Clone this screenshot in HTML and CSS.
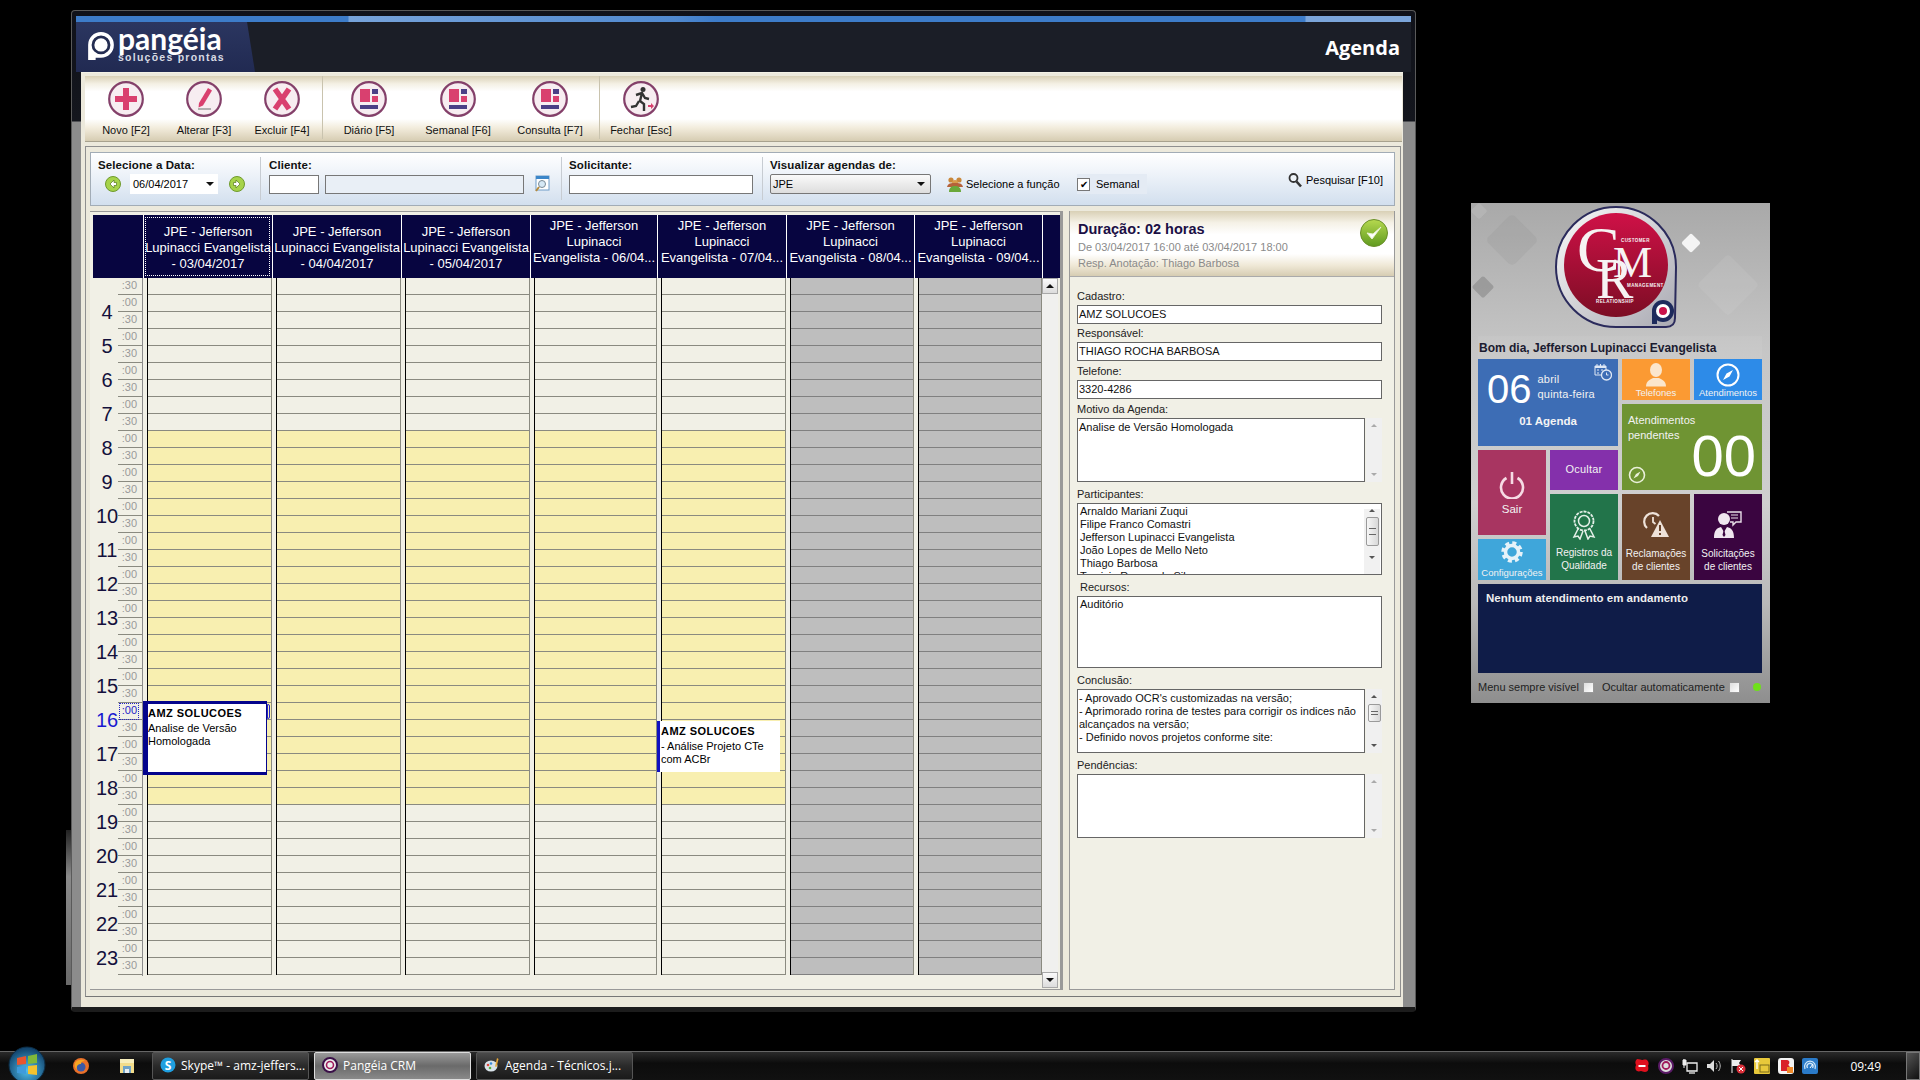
FILE: index.html
```html
<!DOCTYPE html>
<html lang="pt-BR">
<head>
  <meta charset="UTF-8">
  <title>Pangéia CRM - Agenda</title>
  <link rel="stylesheet" href="styles.css">
</head>
<body>
<div class="desktop">
  <div class="glass-edge"></div>

  <!-- janela principal -->
  <section class="window">
    <div class="strip"></div>
    <header class="head">
      <div class="logo-tab">
        <svg class="logo-mark" viewBox="0 0 26 28" width="28" height="30">
          <path d="M1 27V13a12 12 0 1 1 12 12H8v2z" fill="#fff"/>
          <circle cx="13" cy="13" r="7.500" fill="none" stroke="#242d52" stroke-width="2.600"/>
          <circle cx="13" cy="13" r="3.800" fill="#fff"/>
        </svg>
        <div class="logo-text">
          <span class="logo-name">pangéia</span>
          <span class="logo-sub">soluções prontas</span>
        </div>
      </div>
      <h1 class="head-title">Agenda</h1>
    </header>

    <div class="client">
      <nav class="toolbar">
        <div class="tool-group group-a">
          <div class="tool">
            <svg class="tool-icon" viewBox="0 0 36 36"><circle class="ring" cx="18" cy="18" r="16.8"/><path d="M15 7h6v8h8v6h-8v8h-6v-8H7v-6h8z" fill="#d9406f"/></svg>
            <span>Novo [F2]</span>
          </div>
          <div class="tool">
            <svg class="tool-icon" viewBox="0 0 36 36"><circle class="ring" cx="18" cy="18" r="16.8"/><path d="M22 7l4 2.500-9 15-4.500 2 .5-4.500z" fill="#d9406f"/><path d="M12 28h13" stroke="#9a9a9a" stroke-width="1.500"/></svg>
            <span>Alterar [F3]</span>
          </div>
          <div class="tool">
            <svg class="tool-icon" viewBox="0 0 36 36"><circle class="ring" cx="18" cy="18" r="16.8"/><path d="M11 8l14 20M25 8L11 28" stroke="#d9406f" stroke-width="5.500" fill="none"/></svg>
            <span>Excluir [F4]</span>
          </div>
        </div>
        <div class="tool-group group-b">
          <div class="tool">
            <svg class="tool-icon" viewBox="0 0 36 36"><circle class="ring" cx="18" cy="18" r="16.8"/><rect x="9" y="8" width="10" height="13" fill="#d9406f"/><rect x="21" y="8" width="6" height="5" fill="#4b3f86"/><rect x="21" y="15" width="6" height="6" fill="#d9406f"/><rect x="9" y="24" width="18" height="4" fill="#4b3f86"/></svg>
            <span>Diário [F5]</span>
          </div>
          <div class="tool">
            <svg class="tool-icon" viewBox="0 0 36 36"><circle class="ring" cx="18" cy="18" r="16.8"/><rect x="9" y="8" width="10" height="13" fill="#d9406f"/><rect x="21" y="8" width="6" height="5" fill="#4b3f86"/><rect x="21" y="15" width="6" height="6" fill="#d9406f"/><rect x="9" y="24" width="18" height="4" fill="#4b3f86"/></svg>
            <span>Semanal [F6]</span>
          </div>
          <div class="tool">
            <svg class="tool-icon" viewBox="0 0 36 36"><circle class="ring" cx="18" cy="18" r="16.8"/><rect x="9" y="8" width="10" height="13" fill="#d9406f"/><rect x="21" y="8" width="6" height="5" fill="#4b3f86"/><rect x="21" y="15" width="6" height="6" fill="#d9406f"/><rect x="9" y="24" width="18" height="4" fill="#4b3f86"/></svg>
            <span>Consulta [F7]</span>
          </div>
        </div>
        <div class="tool-group group-c">
          <div class="tool">
            <svg class="tool-icon" viewBox="0 0 36 36"><circle class="ring" cx="18" cy="18" r="16.8"/><circle cx="20" cy="8.500" r="2.500" fill="#333"/><path d="M13 14l6-2 3 5 4 1M19 12l-2 8 4 3 0 7M16 20l-3 5-5 1" fill="none" stroke="#333" stroke-width="2.400"/><path d="M25 24h3v-2l3 3-3 3v-2h-3z" fill="#d9406f"/></svg>
            <span>Fechar [Esc]</span>
          </div>
        </div>
      </nav>

      <div class="frame">
        <div class="filters">
          <div class="filter filter-date">
            <label class="filter-label">Selecione a Data:</label>
            <div class="filter-row">
              <svg class="arrow-btn" viewBox="0 0 16 16" width="16" height="16"><circle cx="8" cy="8" r="7.500" fill="#a6d34a" stroke="#6f9a2c"/><path d="M9 4L5 8l4 4V9.500h2.500v-3H9z" fill="#fff" stroke="#577a20" stroke-width=".7"/></svg>
              <div class="date-box"><span>06/04/2017</span><i class="tri-down"></i></div>
              <svg class="arrow-btn" viewBox="0 0 16 16" width="16" height="16"><circle cx="8" cy="8" r="7.500" fill="#a6d34a" stroke="#6f9a2c"/><path d="M7 4l4 4-4 4V9.500H4.500v-3H7z" fill="#fff" stroke="#577a20" stroke-width=".7"/></svg>
            </div>
          </div>
          <div class="filter filter-client">
            <label class="filter-label">Cliente:</label>
            <div class="filter-row">
              <div class="inp inp-code"></div>
              <div class="inp inp-name"></div>
              <svg class="lookup" viewBox="0 0 16 18" width="16" height="18"><rect x="2" y="1" width="13" height="14" fill="#fff" stroke="#6f9cc8"/><rect x="2" y="1" width="13" height="3" fill="#3b86c9"/><circle cx="8" cy="9" r="3.500" fill="#d5e8f5" stroke="#7a8a96"/><path d="M5 12l-3 4" stroke="#b58a3c" stroke-width="2"/></svg>
            </div>
          </div>
          <div class="filter filter-solic">
            <label class="filter-label">Solicitante:</label>
            <div class="filter-row"><div class="inp inp-solic"></div></div>
          </div>
          <div class="filter filter-view">
            <label class="filter-label">Visualizar agendas de:</label>
            <div class="filter-row">
              <div class="select-box"><span>JPE</span><i class="tri-down"></i></div>
              <div class="role-pick">
                <svg viewBox="0 0 18 18" width="18" height="18"><circle cx="5" cy="5" r="2.600" fill="#c9873a"/><circle cx="13" cy="5" r="2.600" fill="#c9873a"/><circle cx="9" cy="8" r="3" fill="#d99b4a"/><path d="M1 12c1-4 4-4 8-4s7 0 8 4z" fill="#b5623a"/><path d="M3 17c0-5 3-6 6-6s6 1 6 6z" fill="#6aa83a"/></svg>
                <span>Selecione a função</span>
              </div>
              <div class="week-check"><i class="check-box">✔</i><span>Semanal</span></div>
              <div class="search-btn">
                <svg viewBox="0 0 16 16" width="16" height="16"><circle cx="6.500" cy="6" r="4" fill="#eef3f8" stroke="#333" stroke-width="1.800"/><path d="M9.500 9.500l4.500 5" stroke="#333" stroke-width="2.600"/></svg>
                <span>Pesquisar [F10]</span>
              </div>
            </div>
          </div>
        </div>

        <div class="work">
          <div class="schedule">
            <div class="sched-head">
              <div class="sched-corner"></div>
              <div class="day focus">JPE - Jefferson<br>Lupinacci Evangelista<br>- 03/04/2017</div>
              <div class="day">JPE - Jefferson<br>Lupinacci Evangelista<br>- 04/04/2017</div>
              <div class="day">JPE - Jefferson<br>Lupinacci Evangelista<br>- 05/04/2017</div>
              <div class="day day-cut">JPE - Jefferson<br>Lupinacci<br>Evangelista - 06/04...</div>
              <div class="day day-cut">JPE - Jefferson<br>Lupinacci<br>Evangelista - 07/04...</div>
              <div class="day day-cut">JPE - Jefferson<br>Lupinacci<br>Evangelista - 08/04...</div>
              <div class="day day-cut">JPE - Jefferson<br>Lupinacci<br>Evangelista - 09/04...</div>
              <div class="day-end"></div>
            </div>
            <div class="sched-body">
              <div class="gutter">
                <div class="hour first"><b></b><span>:30</span></div>
                <div class="hour"><b>4</b><span>:00</span><span>:30</span></div>
                <div class="hour"><b>5</b><span>:00</span><span>:30</span></div>
                <div class="hour"><b>6</b><span>:00</span><span>:30</span></div>
                <div class="hour"><b>7</b><span>:00</span><span>:30</span></div>
                <div class="hour"><b>8</b><span>:00</span><span>:30</span></div>
                <div class="hour"><b>9</b><span>:00</span><span>:30</span></div>
                <div class="hour"><b>10</b><span>:00</span><span>:30</span></div>
                <div class="hour"><b>11</b><span>:00</span><span>:30</span></div>
                <div class="hour"><b>12</b><span>:00</span><span>:30</span></div>
                <div class="hour"><b>13</b><span>:00</span><span>:30</span></div>
                <div class="hour"><b>14</b><span>:00</span><span>:30</span></div>
                <div class="hour"><b>15</b><span>:00</span><span>:30</span></div>
                <div class="hour now"><b>16</b><span class="cur">:00</span><span>:30</span></div>
                <div class="hour"><b>17</b><span>:00</span><span>:30</span></div>
                <div class="hour"><b>18</b><span>:00</span><span>:30</span></div>
                <div class="hour"><b>19</b><span>:00</span><span>:30</span></div>
                <div class="hour"><b>20</b><span>:00</span><span>:30</span></div>
                <div class="hour"><b>21</b><span>:00</span><span>:30</span></div>
                <div class="hour"><b>22</b><span>:00</span><span>:30</span></div>
                <div class="hour"><b>23</b><span>:00</span><span>:30</span></div>
              </div>
              <div class="slot-cell"><div class="col">
                <i class="ev-handle"></i>
                <article class="event event-sel"><b>AMZ SOLUCOES</b><p>Analise de Versão Homologada</p></article>
              </div></div>
              <div class="slot-cell"><div class="col"></div></div>
              <div class="slot-cell"><div class="col"></div></div>
              <div class="slot-cell"><div class="col"></div></div>
              <div class="slot-cell"><div class="col">
                <article class="event event-plain"><b>AMZ SOLUCOES</b><p>- Análise Projeto CTe com ACBr</p></article>
              </div></div>
              <div class="slot-cell"><div class="col col-off"></div></div>
              <div class="slot-cell"><div class="col col-off"></div></div>
              <div class="vscroll"><i class="sb-btn"><em class="tri-up"></em></i><i class="sb-btn"><em class="tri-down"></em></i></div>
            </div>
          </div>

          <aside class="details">
            <div class="det-head">
              <div class="det-title">Duração: 02 horas</div>
              <div class="det-sub">De 03/04/2017 16:00 até 03/04/2017 18:00</div>
              <div class="det-sub">Resp. Anotação: Thiago Barbosa</div>
              <svg class="det-ok" viewBox="0 0 28 28" width="28" height="28">
                <defs><linearGradient id="okg" x1="0" y1="0" x2="0" y2="1"><stop offset="0" stop-color="#b6d94f"/><stop offset="1" stop-color="#5f9a1f"/></linearGradient></defs>
                <circle cx="14" cy="14" r="13.500" fill="url(#okg)" stroke="#6a8f2a"/>
                <path d="M7 14l5 6L21 8l-8 7z" fill="#fff" stroke="#e8f2cf"/>
              </svg>
            </div>
            <div class="det-body">
              <div class="fld near first-fld"><label>Cadastro:</label><div class="box line">AMZ SOLUCOES</div></div>
              <div class="fld nearest"><label>Responsável:</label><div class="box line">THIAGO ROCHA BARBOSA</div></div>
              <div class="fld near"><label>Telefone:</label><div class="box line">3320-4286</div></div>
              <div class="fld near"><label>Motivo da Agenda:</label>
                <div class="with-bar">
                  <div class="box memo">Analise de Versão Homologada</div>
                  <div class="mini-bar"><em class="tri-up dim"></em><em class="tri-down dim"></em></div>
                </div>
              </div>
              <div class="fld"><label>Participantes:</label>
                <div class="box list">
                  <div class="list-names">Arnaldo Mariani Zuqui<br>Filipe Franco Comastri<br>Jefferson Lupinacci Evangelista<br>João Lopes de Mello Neto<br>Thiago Barbosa<br>Tarcisio Ramos da Silva</div>
                  <div class="list-bar"><em class="tri-up"></em><i class="thumb"></i><em class="tri-down"></em></div>
                </div>
              </div>
              <div class="fld"><label class="shift">Recursos:</label><div class="box res">Auditório</div></div>
              <div class="fld"><label>Conclusão:</label>
                <div class="with-bar">
                  <div class="box memo">- Aprovado OCR's customizadas na versão;<br>- Aprimorado rorina de testes para corrigir os indices não alcançados na versão;<br>- Definido novos projetos conforme site:</div>
                  <div class="mini-bar"><em class="tri-up"></em><i class="thumb thumb-sm"></i><em class="tri-down"></em></div>
                </div>
              </div>
              <div class="fld"><label>Pendências:</label>
                <div class="with-bar">
                  <div class="box memo"></div>
                  <div class="mini-bar"><em class="tri-up dim"></em><em class="tri-down dim"></em></div>
                </div>
              </div>
            </div>
          </aside>
        </div>
      </div>
    </div>
  </section>

  <!-- painel lateral CRM -->
  <section class="crm">
    <svg class="crm-art" viewBox="0 0 299 133" width="299" height="133">
      <defs>
        <linearGradient id="redg" x1="0" y1="0" x2="0" y2="1"><stop offset="0" stop-color="#cf1147"/><stop offset="1" stop-color="#7c0d24"/></linearGradient>
        <linearGradient id="rimg" x1="0" y1="0" x2="1" y2="1"><stop offset="0" stop-color="#fafafa"/><stop offset="1" stop-color="#a9a9b2"/></linearGradient>
      </defs>
      <rect x="22" y="18" width="38" height="38" rx="5" transform="rotate(45 41 37)" fill="#8a8a8a" opacity=".16"/>
      <rect x="4" y="76" width="16" height="16" rx="2" transform="rotate(45 12 84)" fill="#777" opacity=".45"/>
      <rect x="2" y="2" width="12" height="12" rx="2" transform="rotate(45 8 8)" fill="#ddd" opacity=".2"/>
      <rect x="213" y="33" width="14" height="14" rx="2" transform="rotate(45 220 40)" fill="#f4f4f4"/>
      <rect x="235" y="60" width="44" height="44" rx="4" transform="rotate(45 257 82)" fill="#ddd" opacity=".14"/>
      <path d="M145 4a60 60 0 0 1 60 60l-1 51q0 9-9 9H145a60 60 0 0 1 0-120z" fill="url(#rimg)" stroke="#2b2b5c" stroke-width="2"/>
      <circle cx="145" cy="62" r="52" fill="url(#redg)"/>
      <text class="crm-c" x="106" y="68">C</text>
      <text class="crm-m" x="142" y="74">M</text>
      <text class="crm-r" x="125" y="95">R</text>
      <text class="crm-tiny" x="150" y="39">CUSTOMER</text>
      <text class="crm-tiny" x="156" y="84">MANAGEMENT</text>
      <text class="crm-tiny" x="125" y="100">RELATIONSHIP</text>
      <circle cx="192" cy="108" r="11" fill="#1d2a5c"/>
      <rect x="181" y="108" width="5" height="13" fill="#1d2a5c"/>
      <circle cx="192" cy="108" r="7" fill="#fff"/>
      <circle cx="192" cy="108" r="4" fill="#c8124a"/>
    </svg>
    <div class="crm-main">
      <div class="crm-hello">Bom dia, Jefferson Lupinacci Evangelista</div>
      <div class="tiles">
        <div class="tile t-date">
          <svg class="cal-ico" viewBox="0 0 18 18" width="18" height="18"><path d="M1 3h11v9H1z" fill="none" stroke="#dfe8f5"/><path d="M1 3h11v2H1z" fill="#dfe8f5"/><path d="M3 1v3M6.500 1v3M10 1v3" stroke="#dfe8f5"/><path d="M3 7h2M7 7h2M3 10h2" stroke="#dfe8f5"/><circle cx="12.500" cy="12" r="5" fill="#3d6db5" stroke="#dfe8f5" stroke-width="1.300"/><path d="M12.500 9.500V12h2" fill="none" stroke="#dfe8f5"/></svg>
          <div class="date-top">
            <span class="date-num">06</span>
            <span class="date-txt">abril<br>quinta-feira</span>
          </div>
          <div class="date-count">01 Agenda</div>
        </div>
        <div class="tile t-phones">
          <svg viewBox="0 0 24 24" width="24" height="25"><ellipse cx="12" cy="7.500" rx="6" ry="7" fill="#fbe6cc"/><path d="M2 24c0-6 5-7 7-8.500h6C17 17 22 18 22 24z" fill="#fbe6cc"/></svg>
          <span>Telefones</span>
        </div>
        <div class="tile t-calls">
          <svg viewBox="0 0 24 24" width="24" height="24"><circle cx="12" cy="12" r="10.500" fill="none" stroke="#fff" stroke-width="2"/><path d="M17 7l-3.500 6.500L7 17l3.500-6.500z" fill="#fff"/></svg>
          <span>Atendimentos</span>
        </div>
        <div class="tile t-pending">
          <div class="pend-txt">Atendimentos<br>pendentes</div>
          <svg class="pend-ico" viewBox="0 0 18 18" width="18" height="18"><circle cx="9" cy="9" r="7.500" fill="none" stroke="#eaf0da" stroke-width="1.600"/><path d="M12.500 5.500l-2.500 4.500-4.500 2.500 2.500-4.500z" fill="#eaf0da"/></svg>
          <span class="pend-num">00</span>
        </div>
        <div class="tile t-exit">
          <svg viewBox="0 0 26 28" width="26" height="28"><path d="M7.500 7a11 11 0 1 0 11 0" fill="none" stroke="#f6dbe4" stroke-width="2.600"/><path d="M13 1v12" stroke="#f6dbe4" stroke-width="2.600"/></svg>
          <span>Sair</span>
        </div>
        <div class="tile t-hide">Ocultar</div>
        <div class="tile t-quality">
          <svg viewBox="0 0 24 30" width="24" height="30"><circle cx="12" cy="11" r="9.500" fill="none" stroke="#e4efe8" stroke-width="1.800" stroke-dasharray="3 1"/><circle cx="12" cy="11" r="5.500" fill="none" stroke="#e4efe8" stroke-width="1.500"/><path d="M6 19l-4 8 4-1 2 3 3-8M18 19l4 8-4-1-2 3-3-8" fill="none" stroke="#e4efe8" stroke-width="1.500"/></svg>
          <span>Registros da<br>Qualidade</span>
        </div>
        <div class="tile t-claims">
          <svg viewBox="0 0 28 28" width="28" height="28"><path d="M5 17A8.500 8.500 0 1 1 17 5" fill="none" stroke="#eee2d9" stroke-width="2.200"/><path d="M11 6v5l2.500 2" fill="none" stroke="#eee2d9" stroke-width="1.800"/><path d="M18 9l9 17H9z" fill="#eee2d9"/><path d="M18 14v6M18 22v2" stroke="#68432a" stroke-width="2"/></svg>
          <span>Reclamações<br>de clientes</span>
        </div>
        <div class="tile t-requests">
          <svg viewBox="0 0 30 28" width="30" height="28"><path d="M14 1h14v10h-5l-3 3v-3h-3" fill="none" stroke="#e8dfe8" stroke-width="1.400"/><path d="M18 4h7M18 7h7" stroke="#e8dfe8"/><circle cx="11" cy="8" r="6" fill="#efe6ef"/><path d="M1 27c0-8 3-10 7-11l3 5 3-5c4 1 7 3 7 11z" fill="#efe6ef"/><path d="M11 18l-1.500 6 1.500 2 1.500-2z" fill="#3a0540"/></svg>
          <span>Solicitações<br>de clientes</span>
        </div>
        <div class="tile t-config">
          <svg viewBox="0 0 22 22" width="22" height="22"><circle cx="11" cy="11" r="6.500" fill="none" stroke="#e6f2f9" stroke-width="3.500"/><circle cx="11" cy="11" r="9" fill="none" stroke="#e6f2f9" stroke-width="3.500" stroke-dasharray="4 3.070"/></svg>
          <span>Configurações</span>
        </div>
      </div>
      <div class="crm-status">Nenhum atendimento em andamento</div>
      <div class="crm-foot">
        <span>Menu sempre visível</span><i class="foot-check"></i>
        <span class="foot-auto">Ocultar automaticamente</span><i class="foot-check"></i>
        <i class="led"></i>
      </div>
    </div>
  </section>
</div>

<!-- barra de tarefas -->
<footer class="taskbar">
  <svg class="orb" viewBox="0 0 38 38" width="38" height="38">
    <defs><radialGradient id="orbg" cx=".5" cy=".65" r=".6"><stop offset="0" stop-color="#4fc0ee"/><stop offset="1" stop-color="#13466f"/></radialGradient></defs>
    <circle cx="19" cy="19" r="18" fill="url(#orbg)" stroke="#0c2c44"/>
    <path d="M9 12l9-2v8l-9 1z" fill="#e8552f"/><path d="M20 10l9-2v9l-9 1z" fill="#7fb83a"/>
    <path d="M9 21l9-1v8l-9-1z" fill="#3f9bdc"/><path d="M20 20l9-1v10l-9-1z" fill="#f4c22e"/>
  </svg>
  <svg class="quick q-fox" viewBox="0 0 18 18" width="18" height="18"><circle cx="9" cy="9" r="8" fill="#e8702a"/><circle cx="9" cy="10" r="4.500" fill="#3a5aa8"/><path d="M3 6c2-4 8-4 10-2-3 0-4 1-4 3-3 0-5 2-4 6-2-2-3-4-2-7z" fill="#f6a623"/></svg>
  <svg class="quick q-folder" viewBox="0 0 18 18" width="18" height="18"><path d="M2 2h14v14H2z" fill="#f2dc8a"/><path d="M2 2h14v4H2z" fill="#f7eebc"/><path d="M5 9h8v7H5z" fill="#6fa3c8"/><path d="M7 12h4v4H7z" fill="#e8eef3"/></svg>
  <div class="task">
    <svg viewBox="0 0 16 16" width="16" height="16"><circle cx="8" cy="8" r="7.500" fill="#1f9fe0"/><text class="skype-s" x="8" y="12.500">S</text></svg>
    <span>Skype™ - amz-jeffers...</span>
  </div>
  <div class="task task-on">
    <svg viewBox="0 0 16 16" width="16" height="16"><circle cx="8" cy="8" r="7" fill="#eee" stroke="#3b1048" stroke-width="2"/><circle cx="8" cy="8" r="3.500" fill="none" stroke="#a01a5c" stroke-width="1.600"/></svg>
    <span>Pangéia CRM</span>
  </div>
  <div class="task">
    <svg viewBox="0 0 16 16" width="16" height="16"><ellipse cx="7" cy="9" rx="6.500" ry="5.500" fill="#d9e3ea"/><circle cx="4" cy="8" r="1.300" fill="#e04a3a"/><circle cx="7" cy="6.500" r="1.300" fill="#3a8ad9"/><circle cx="6" cy="11" r="1.300" fill="#58b03a"/><path d="M13 1l1.500 1-2 8-1.500-.5z" fill="#e8a83a"/></svg>
    <span>Agenda - Técnicos.j...</span>
  </div>
  <div class="tray">
    <svg viewBox="0 0 16 16" width="16" height="16"><path d="M3 1c3 0 4 1 5 1s3-1 5 0c2 2 2 4 1 6 1 3 0 6-3 6-2 0-3-1-4-1s-2 1-4 0C1 12 1 9 2 7 1 5 1 3 3 1z" fill="#e0101e"/><rect x="4.500" y="7" width="7" height="2" fill="#fff"/></svg>
    <svg viewBox="0 0 16 16" width="16" height="16"><circle cx="8" cy="8" r="7" fill="#ddd" stroke="#5a1a66" stroke-width="2"/><circle cx="8" cy="7.500" r="3.500" fill="none" stroke="#a01a5c" stroke-width="1.800"/></svg>
    <svg viewBox="0 0 16 16" width="16" height="16"><path d="M5 5h10v8H5z" fill="none" stroke="#eee" stroke-width="1.300"/><path d="M7 15h6" stroke="#eee" stroke-width="1.300"/><path d="M2 1v9M1 2h3v5H1z" fill="#eee" stroke="#eee"/></svg>
    <svg viewBox="0 0 16 16" width="16" height="16"><path d="M1 6h3l4-4v12l-4-4H1z" fill="#ddd"/><path d="M10 5c1.500 2 1.500 4 0 6M12.500 3c2.300 3 2.300 7 0 10" fill="none" stroke="#bbb"/></svg>
    <svg viewBox="0 0 16 16" width="16" height="16"><path d="M2 1v14" stroke="#eee"/><path d="M2 2h9l-2 3 2 3H2z" fill="#eee"/><circle cx="11" cy="11" r="4.500" fill="#d9303a"/><path d="M9 9l4 4M13 9l-4 4" stroke="#fff"/></svg>
    <svg viewBox="0 0 16 16" width="16" height="16"><rect width="16" height="16" rx="1" fill="#e8c83a"/><rect x="6" y="7" width="9" height="7" fill="none" stroke="#7a6a1a"/><path d="M3 11V2M1 4l2-2 2 2" fill="none" stroke="#fff" stroke-width="1.300"/></svg>
    <svg viewBox="0 0 16 16" width="16" height="16"><rect width="16" height="16" rx="3" fill="#f4f4f4"/><path d="M3 2h6c3 0 3 4 1 5 3 1 2 6-1 6H3z" fill="#d9202a"/><rect x="9" y="9" width="6" height="6" fill="#f08a2a"/></svg>
    <svg viewBox="0 0 16 16" width="16" height="16"><rect width="16" height="16" rx="2" fill="#2a7ac8"/><path d="M3 11a5.500 5.500 0 1 1 10 0M5.500 10a3 3 0 1 1 5 0" fill="none" stroke="#cfe6f8" stroke-width="1.300"/><path d="M8 10l3-4" stroke="#fff"/></svg>
    <span class="clock">09:49</span>
    <div class="show-desk"></div>
  </div>
</footer>
</body>
</html>
```

FILE: styles.css
```css
* { box-sizing: border-box; }
html, body { height: 100%; }
body { margin: 0; background: #000; font-family: 'Liberation Sans', Arial, sans-serif; font-size: 11px; color: #000; display: flex; flex-direction: column; overflow: hidden; }
.desktop { flex: 1; position: relative; }
.glass-edge { position: absolute; left: 66px; top: 830px; width: 6px; height: 155px; background: linear-gradient(#222, #8a8a8a 30%, #6a6a6a); }

/* janela */
.window { position: absolute; left: 71px; top: 10px; width: 1345px; height: 1002px; padding: 5px 4px 0; border: 1px solid #5a5a5a; border-bottom: 5px solid #1c1c1c; border-radius: 4px; background: linear-gradient(#10121a 0, #14161d 110px, #8c8c8c 111px); display: flex; flex-direction: column; }
.strip { height: 6px; flex: none; background: linear-gradient(90deg, #3d7cc9 0, #3d7cc9 272px, #77a3da 273px, #5089cf 600px, #3d7cc9 640px, #3d7cc9 1229px, #7ba5da 1230px); }
.head { height: 50px; flex: none; background: #1b1e27; display: flex; justify-content: space-between; align-items: center; }
.logo-tab { width: 179px; height: 50px; padding: 3px 0 0 11px; background: linear-gradient(#2b3660, #212a52); clip-path: polygon(0 0, 171px 0, 100% 100%, 0 100%); display: flex; gap: 3px; color: #fff; }
.logo-mark { flex: none; margin-top: 6px; }
.logo-text { display: flex; flex-direction: column; }
.logo-name { font-family: Lato, 'Open Sans', sans-serif; font-weight: bold; font-size: 30px; line-height: 26px; height: 26px; letter-spacing: 0; }
.logo-sub { font-size: 10.5px; font-weight: bold; letter-spacing: 1.25px; line-height: 13px; white-space: nowrap; color: #d8dbe4; }
.head-title { margin: 0 11px 0 0; font-family: 'Open Sans', sans-serif; font-size: 20px; font-weight: bold; color: #fff; }

.client { flex: 1; margin: 0 8px 0 5px; height: 926px; background: #ece9dc; padding: 3px 1px 0 4px; border-top: 1px solid #f3f1e6; }
.toolbar { height: 66px; display: flex; background: linear-gradient(#d9d0b6 0, #f4f0e4 12%, #fff 24%, #fff 66%, #f2ecdc 80%, #d6ccb2 100%); border-bottom: 1px solid #a8a28e; }
.tool-group { display: grid; height: 63px; border-right: 1px solid #c9c3ae; }
.group-a { width: 238px; padding-left: 2px; grid-template-columns: 78px 78px 78px; }
.group-b { width: 277px; grid-template-columns: 92px 86px 98px; }
.group-c { width: 82px; grid-template-columns: 82px; border-right: 0; }
.tool { display: flex; flex-direction: column; align-items: center; padding-top: 5px; }
.tool-icon { width: 36px; height: 36px; }
.tool span { margin-top: 6px; line-height: 14px; white-space: nowrap; color: #111; }
.ring { fill: #f7edf1; stroke: #84406a; stroke-width: 2.2; }

.frame { height: 851px; margin-top: 4px; padding: 5px 5px 0 4px; border: 1px solid #8f8f8f; border-bottom-color: #777; width: 1316px; background: #ece9dc; }
.filters { height: 54px; display: flex; background: linear-gradient(#fff, #eef3f9 40%, #d2dfee); border: 1px solid #a2acb6; }
.filter { padding: 2px 0 0 8px; margin: 4px 0 5px; border-right: 1px solid #c7ccd2; }
.filter-date { width: 170px; padding-left: 7px; }
.filter-client { width: 301px; }
.filter-solic { width: 201px; padding-left: 7px; }
.filter-view { flex: 1; border: 0; padding-left: 7px; position: relative; }
.filter-label { display: block; font-size: 11.5px; font-weight: bold; line-height: 12px; color: #111; letter-spacing: .1px; }
.filter-row { display: flex; align-items: center; height: 20px; margin-top: 3px; position: relative; }
.arrow-btn { flex: none; }
.filter-date .arrow-btn:first-child { margin-left: 7px; }
.date-box { width: 88px; height: 20px; margin: 0 11px 0 9px; background: #fff; display: flex; align-items: center; justify-content: space-between; padding: 0 4px 0 3px; }
.inp { height: 19px; background: #fff; border: 1px solid #777; }
.inp-code { width: 50px; }
.inp-name { width: 199px; margin-left: 6px; background: #e9eff6; }
.lookup { margin-left: 10px; }
.inp-solic { width: 184px; }
.select-box { width: 161px; height: 20px; padding: 0 5px 0 2px; border: 1px solid #777; border-radius: 2px; background: linear-gradient(#fafafa, #ddd); display: flex; align-items: center; justify-content: space-between; }
.role-pick { display: flex; align-items: center; gap: 2px; margin-left: 15px; width: 131px; white-space: nowrap; }
.week-check { display: flex; align-items: center; gap: 6px; width: 70px; height: 20px; background: #e4ebf4; padding-left: 0; }
.check-box { width: 13px; height: 13px; background: #fff; border: 1px solid #777; font-style: normal; font-size: 10px; line-height: 11px; text-align: center; }
.search-btn { position: absolute; right: 11px; top: -2px; display: flex; align-items: center; gap: 3px; white-space: nowrap; }
.tri-down, .tri-up { display: block; width: 0; height: 0; border-left: 4px solid transparent; border-right: 4px solid transparent; }
.tri-down { border-top: 4px solid #111; }
.tri-up { border-bottom: 4px solid #111; }
.mini-bar .tri-down, .mini-bar .tri-up, .list-bar .tri-down, .list-bar .tri-up { border-left-width: 3px; border-right-width: 3px; border-top-width: 3px; border-bottom-width: 3px; }
.mini-bar .tri-down, .list-bar .tri-down { border-bottom-width: 0; border-top-color: #555; }
.mini-bar .tri-up, .list-bar .tri-up { border-top-width: 0; border-bottom-color: #555; }
.mini-bar .dim.tri-down { border-top-color: #aaa; }
.mini-bar .dim.tri-up { border-bottom-color: #aaa; }

.work { display: flex; gap: 6px; margin-top: 5px; }
.schedule { width: 973px; height: 779px; padding: 3px 0 0 3px; background: #f1f0e6; border: 1px solid #999; border-width: 1px 3px 1px 0; }
.sched-head, .sched-body { display: grid; grid-template-columns: 50px 129px 129px 129px 127px 129px 128px 128px 17px; }
.sched-head { height: 63px; background: #070540; color: #fff; }
.day { font-size: 13px; line-height: 16px; text-align: center; white-space: nowrap; overflow: hidden; border-left: 1px solid #fff; display: flex; align-items: center; justify-content: center; padding-top: 2px; }
.day-cut { padding: 0 0 10px; }
.day.focus { outline: 1px dotted #fff; outline-offset: -3px; }
.day-end { border-left: 1px solid #fff; }
.sched-body { height: 710px; }
.gutter { padding-left: 3px; border-right: 1px solid #8c8c8c; height: 698px; display: flex; flex-direction: column; }
.hour { height: 34px; flex: none; display: grid; grid-template-columns: 22px 1fr; grid-template-rows: 17px 17px; position: relative; }
.hour.first { height: 17px; grid-template-rows: 17px; }
.hour b { grid-row: 1 / 3; font-weight: normal; font-size: 20px; line-height: 34px; text-align: center; color: #14103c; background: #f1f0e6; z-index: 1; }
.hour span { font-size: 11px; line-height: 15px; height: 17px; text-align: right; padding-right: 5px; color: #999; border-bottom: 1px solid #8a8a80; }
.hour.now b { color: #1a1ad0; }
.hour .cur { color: #2424c8; position: relative; }
.hour .cur::after { content: ''; position: absolute; right: 3px; width: 18px; top: 0; height: 15px; border: 1px dotted #2424c8; }
.slot-cell { padding-left: 4px; height: 697px; }
.col { position: relative; height: 697px; border-left: 1px solid #000; border-right: 1px solid #8a8a80; background: repeating-linear-gradient(transparent 0, transparent 16px, #8a8a80 16px, #8a8a80 17px), linear-gradient(#f1f0e6 0, #f1f0e6 153px, #f8efb0 153px, #f8efb0 527px, #f1f0e6 527px); }
.col-off { background: repeating-linear-gradient(transparent 0, transparent 16px, #808080 16px, #808080 17px), #bebebe; }
.event { position: absolute; background: #fff; overflow: hidden; }
.event b { display: block; font-size: 11px; letter-spacing: .45px; line-height: 14px; white-space: nowrap; }
.event p { margin: 2px 0 0; line-height: 13px; }
.event-sel { left: -5px; top: 423px; width: 124px; height: 74px; border: solid #04048c; border-width: 3px 1px 3px 5px; padding-top: 2px; }
.event-plain { left: -5px; top: 443px; width: 123px; height: 51px; border-left: 3px solid #1010c0; padding: 3px 2px 0 1px; }
.ev-handle { position: absolute; left: 119px; top: 426px; width: 3px; height: 15px; border: 1px solid #2424c8; border-radius: 0 2px 2px 0; }
.vscroll { background: #f0f0ee; height: 710px; width: 16px; display: flex; flex-direction: column; justify-content: space-between; padding: 0; }
.sb-btn { height: 16px; background: linear-gradient(#fafafa, #dcdcdc); border: 1px solid #a8a8a8; display: flex; align-items: center; justify-content: center; }

/* detalhes */
.details { width: 326px; height: 779px; background: #f1f0e6; border: 1px solid #999; border-top: 0; }
.det-head { position: relative; height: 66px; padding: 10px 8px 0; background: linear-gradient(#d9d0b6 0, #f5f1e6 18%, #fff 36%, #fff 66%, #efe8d6 84%, #d6ccb2 100%); border-bottom: 1px solid #aaa; }
.det-title { font-size: 14.5px; font-weight: bold; color: #1b0f45; line-height: 16px; margin-bottom: 2px; }
.det-sub { color: #8a8a8a; font-size: 11px; line-height: 16px; white-space: nowrap; }
.det-ok { position: absolute; left: 290px; top: 8px; }
.det-body { padding: 0 12px 0 7px; }
.fld { margin-top: 6px; }
.fld.near { margin-top: 4px; }
.fld.nearest { margin-top: 3px; }
.first-fld.near { margin-top: 13px; }
.fld label { display: block; height: 15px; line-height: 13px; color: #222; }
.fld label.shift { padding-left: 3px; }
.box { background: #fff; border: 1px solid #666; padding-left: 1px; color: #111; line-height: 13px; }
.line { height: 19px; line-height: 17px; white-space: nowrap; }
.with-bar { display: flex; justify-content: space-between; }
.memo { width: 288px; height: 64px; padding-top: 2px; }
.mini-bar { width: 16px; height: 64px; padding: 6px 0; background: #f0f0f0; display: flex; flex-direction: column; align-items: center; gap: 8px; position: relative; }
.mini-bar em:last-child { margin-top: auto; }
.thumb { display: block; width: 13px; height: 18px; border: 1px solid #9a9a9a; border-radius: 2px; background: linear-gradient(#666, #666) no-repeat, linear-gradient(#666, #666) no-repeat, linear-gradient(90deg, #f6f6f6, #d8d8d8); background-position: center 40%, center 60%, 0 0; background-size: 7px 1px, 7px 1px, 100% 100%; }
.thumb-sm { margin-top: -2px; }
.list { height: 72px; display: flex; overflow: hidden; }
.list-names { flex: 1; padding: 1px 0 0 1px; overflow: hidden; white-space: nowrap; }
.list-bar { width: 16px; margin: 5px 1px 0 0; display: flex; flex-direction: column; align-items: center; gap: 5px; background: #f1f1f1; }
.list-bar .thumb { height: 29px; }
.list-bar em:last-child { margin-top: 5px; }
.res { height: 72px; padding: 1px 0 0 2px; }

/* painel CRM */
.crm { position: absolute; left: 1471px; top: 203px; width: 299px; height: 500px; background: linear-gradient(#a9a9a9, #c6c6c6 30%, #cfcfcf 60%, #b9b9b9 80%, #8e8e8e); }
.crm-art { display: block; }
.crm-art text { fill: #f6f3f3; font-family: 'Liberation Serif', serif; }
.crm-c { font-size: 64px; }
.crm-m { font-size: 44px; }
.crm-r { font-size: 56px; }
.crm-art .crm-tiny { font-family: 'Liberation Sans', sans-serif; font-size: 4.500px; font-weight: bold; letter-spacing: .4px; }
.crm-main { padding: 0 8px 0 7px; }
.crm-hello { font-size: 12px; font-weight: bold; color: #1b1b30; line-height: 20px; height: 23px; padding: 2px 0 0 1px; white-space: nowrap; background: rgba(255,255,255,.06); }
.tiles { display: grid; grid-template-columns: repeat(4, 68px); grid-template-rows: 41px 42px 40px 41px 41px; gap: 4px; color: #f2f2f2; }
.tile { display: flex; flex-direction: column; align-items: center; text-align: center; font-size: 10px; line-height: 13px; position: relative; }
.t-date { grid-area: 1 / 1 / 3 / 3; background: #3d6db5; padding: 7px 0 0 9px; align-items: flex-start; text-align: left; }
.cal-ico { position: absolute; right: 6px; top: 4px; }
.date-top { display: flex; gap: 6px; align-items: center; }
.date-num { font-size: 40px; line-height: 46px; color: #fff; }
.date-txt { font-size: 11px; line-height: 15px; letter-spacing: .2px; margin-top: -4px; }
.date-count { width: 122px; margin-top: 3px; text-align: center; font-size: 11.5px; font-weight: bold; color: #f4f4f4; }
.t-phones { background: #fb9a33; padding-top: 3px; }
.t-calls { background: #2d8be8; padding-top: 4px; }
.t-phones span, .t-calls span { font-size: 9.5px; line-height: 10px; margin-top: 1px; white-space: nowrap; }
.t-calls span { margin-top: 1px; }
.t-pending { grid-area: 2 / 3 / 4 / 5; background: #6f9433; align-items: flex-start; text-align: left; padding: 9px 0 0 6px; font-size: 11px; line-height: 15px; }
.pend-ico { position: absolute; left: 6px; bottom: 6px; }
.pend-num { position: absolute; right: 6px; bottom: 5px; font-size: 58px; line-height: 58px; color: #fff; }
.t-exit { grid-area: 3 / 1 / 5 / 2; background: #a83561; padding-top: 21px; font-size: 11.5px; }
.t-exit span { margin-top: 4px; }
.t-hide { grid-area: 3 / 2 / 4 / 3; background: #8430ab; font-size: 11px; padding-top: 13px; letter-spacing: .2px; }
.t-quality { grid-area: 4 / 2 / 6 / 3; background: #22744a; padding-top: 16px; }
.t-claims { grid-area: 4 / 3 / 6 / 4; background: #68432a; padding-top: 17px; }
.t-requests { grid-area: 4 / 4 / 6 / 5; background: #3a0540; padding-top: 17px; }
.t-quality span { margin-top: 6px; }
.t-claims span, .t-requests span { margin-top: 8px; }
.t-config { grid-area: 5 / 1 / 6 / 2; background: #3fa6da; padding-top: 2px; }
.t-config span { font-size: 9.500px; margin-top: 3px; white-space: nowrap; }
.crm-status { height: 89px; margin-top: 4px; padding: 7px 8px; background: #0f1c48; color: #eee; font-size: 11.5px; font-weight: bold; line-height: 14px; }
.crm-foot { height: 28px; display: flex; align-items: center; color: #222; white-space: nowrap; }
.foot-check { flex: none; width: 11px; height: 11px; margin-left: 4px; background: linear-gradient(135deg, #ddd, #fff); border: 1px solid #999; }
.foot-auto { margin-left: 8px; }
.led { flex: none; width: 8px; height: 8px; margin-left: 13px; border-radius: 50%; background: #6fe01a; }

/* barra de tarefas */
.taskbar { height: 29px; flex: none; position: relative; display: flex; align-items: center; background: linear-gradient(#2a2a2a, #0c0c0c 40%, #111); border-top: 1px solid #666; color: #fff; font-family: 'Open Sans', sans-serif; font-size: 12px; }
.orb { position: absolute; left: 8px; top: -6px; }
.quick { position: absolute; top: 5px; }
.q-fox { left: 72px; }
.q-folder { left: 118px; }
.task { width: 157px; height: 28px; margin-left: 5px; padding: 0 0 2px 7px; display: flex; align-items: center; gap: 5px; border: 1px solid #555; border-radius: 2px; background: linear-gradient(#4a4a4a, #2a2a2a 50%, #1a1a1a); white-space: nowrap; }
.task-on { background: linear-gradient(#9a9a9a, #6a6a6a 50%, #8a8a8a); border-color: #ddd; }
.task:first-of-type { margin-left: 152px; }
.skype-s { fill: #fff; font-size: 12px; font-weight: bold; text-anchor: middle; }
.tray { margin-left: auto; display: flex; align-items: center; gap: 8px; height: 28px; }
.clock { margin: 0 17px 0 24px; }
.show-desk { width: 14px; height: 28px; background: linear-gradient(135deg, #555, #111); border: 1px solid #777; }
```
